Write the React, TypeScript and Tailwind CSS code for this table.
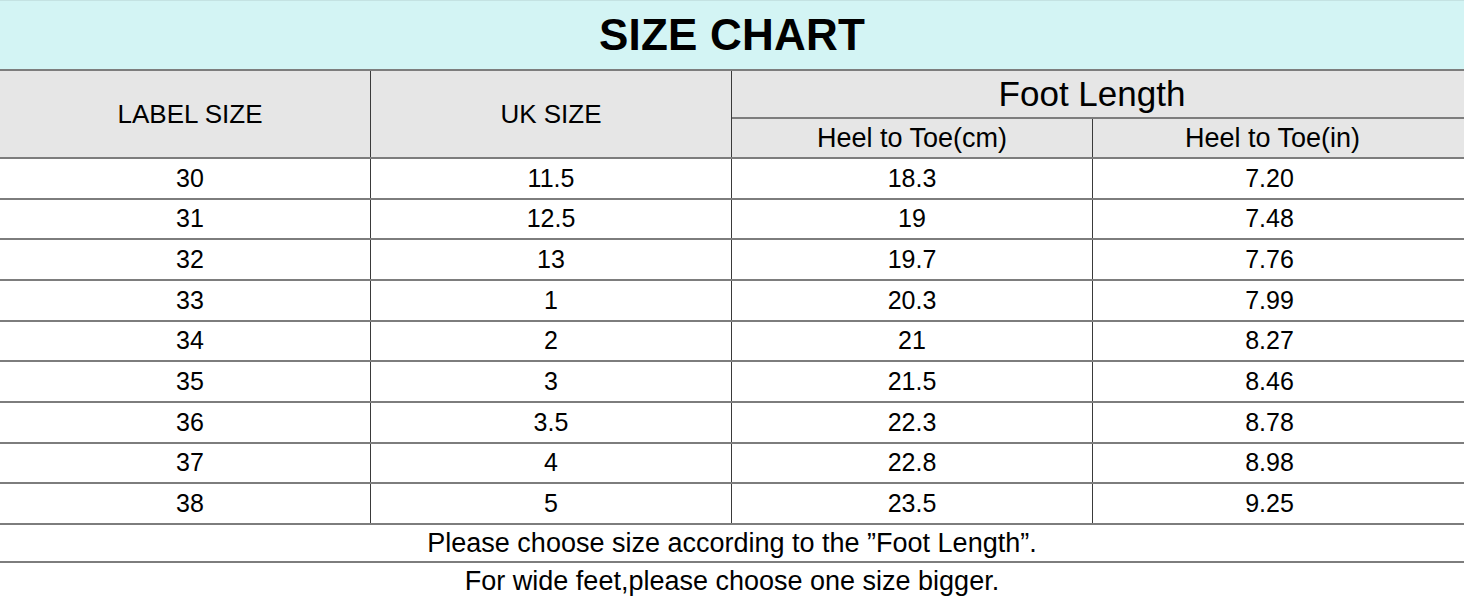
/**
 * Size chart table.
 */

const rows: [string, string, string, string][] = [
  ['30', '11.5', '18.3', '7.20'],
  ['31', '12.5', '19', '7.48'],
  ['32', '13', '19.7', '7.76'],
  ['33', '1', '20.3', '7.99'],
  ['34', '2', '21', '8.27'],
  ['35', '3', '21.5', '8.46'],
  ['36', '3.5', '22.3', '8.78'],
  ['37', '4', '22.8', '8.98'],
  ['38', '5', '23.5', '9.25'],
];

const cell = 'flex items-center justify-center';

export default function App(): JSX.Element {
  return (
    <div
      className="w-[1464px] h-[600px] overflow-hidden bg-white text-black"
      style={{ fontFamily: '"Liberation Sans", Arial, sans-serif' }}
    >
      {/* Title */}
      <div className="h-[71px] bg-[#d3f4f4] border-t border-[#c4e2e2] border-b-2 border-b-[#7d7d7d] flex items-center justify-center">
        <h1 className="text-[44px] font-bold leading-none tracking-[0.2px]">SIZE CHART</h1>
      </div>

      {/* Header */}
      <div className="grid grid-cols-[371px_361px_361px_1fr] grid-rows-[48px_38px] bg-[#e6e6e6] border-b-2 border-[#7d7d7d] text-[26px]">
        <div className={`${cell} row-span-2 pl-[10px] border-r border-[#3a3a3a]`}>LABEL SIZE</div>
        <div className={`${cell} row-span-2 border-r border-[#3a3a3a]`}>UK SIZE</div>
        <div className={`${cell} col-span-2 pr-[12px] border-b-2 border-[#7d7d7d] text-[35px]`}>Foot Length</div>
        <div className={`${cell} border-r border-[#3a3a3a] text-[27px]`}>Heel to Toe(cm)</div>
        <div className={`${cell} pr-[12px] text-[27px]`}>Heel to Toe(in)</div>
      </div>

      {/* Data rows */}
      {rows.map((r) => (
        <div
          key={r[0]}
          className="grid grid-cols-[371px_361px_361px_1fr] h-[40.67px] border-b-2 border-[#7d7d7d] text-[25px]"
        >
          <div className={`${cell} pl-[10px] border-r border-[#3a3a3a]`}>{r[0]}</div>
          <div className={`${cell} border-r border-[#3a3a3a]`}>{r[1]}</div>
          <div className={`${cell} border-r border-[#3a3a3a]`}>{r[2]}</div>
          <div className={`${cell} pr-[18px]`}>{r[3]}</div>
        </div>
      ))}

      {/* Notes */}
      <div className={`${cell} h-[38px] border-b-2 border-[#7d7d7d] text-[27px]`}>
        Please choose size according to the ”Foot Length”.
      </div>
      <div className={`${cell} h-[37px] text-[27px]`}>For wide feet,please choose one size bigger.</div>
    </div>
  );
}
